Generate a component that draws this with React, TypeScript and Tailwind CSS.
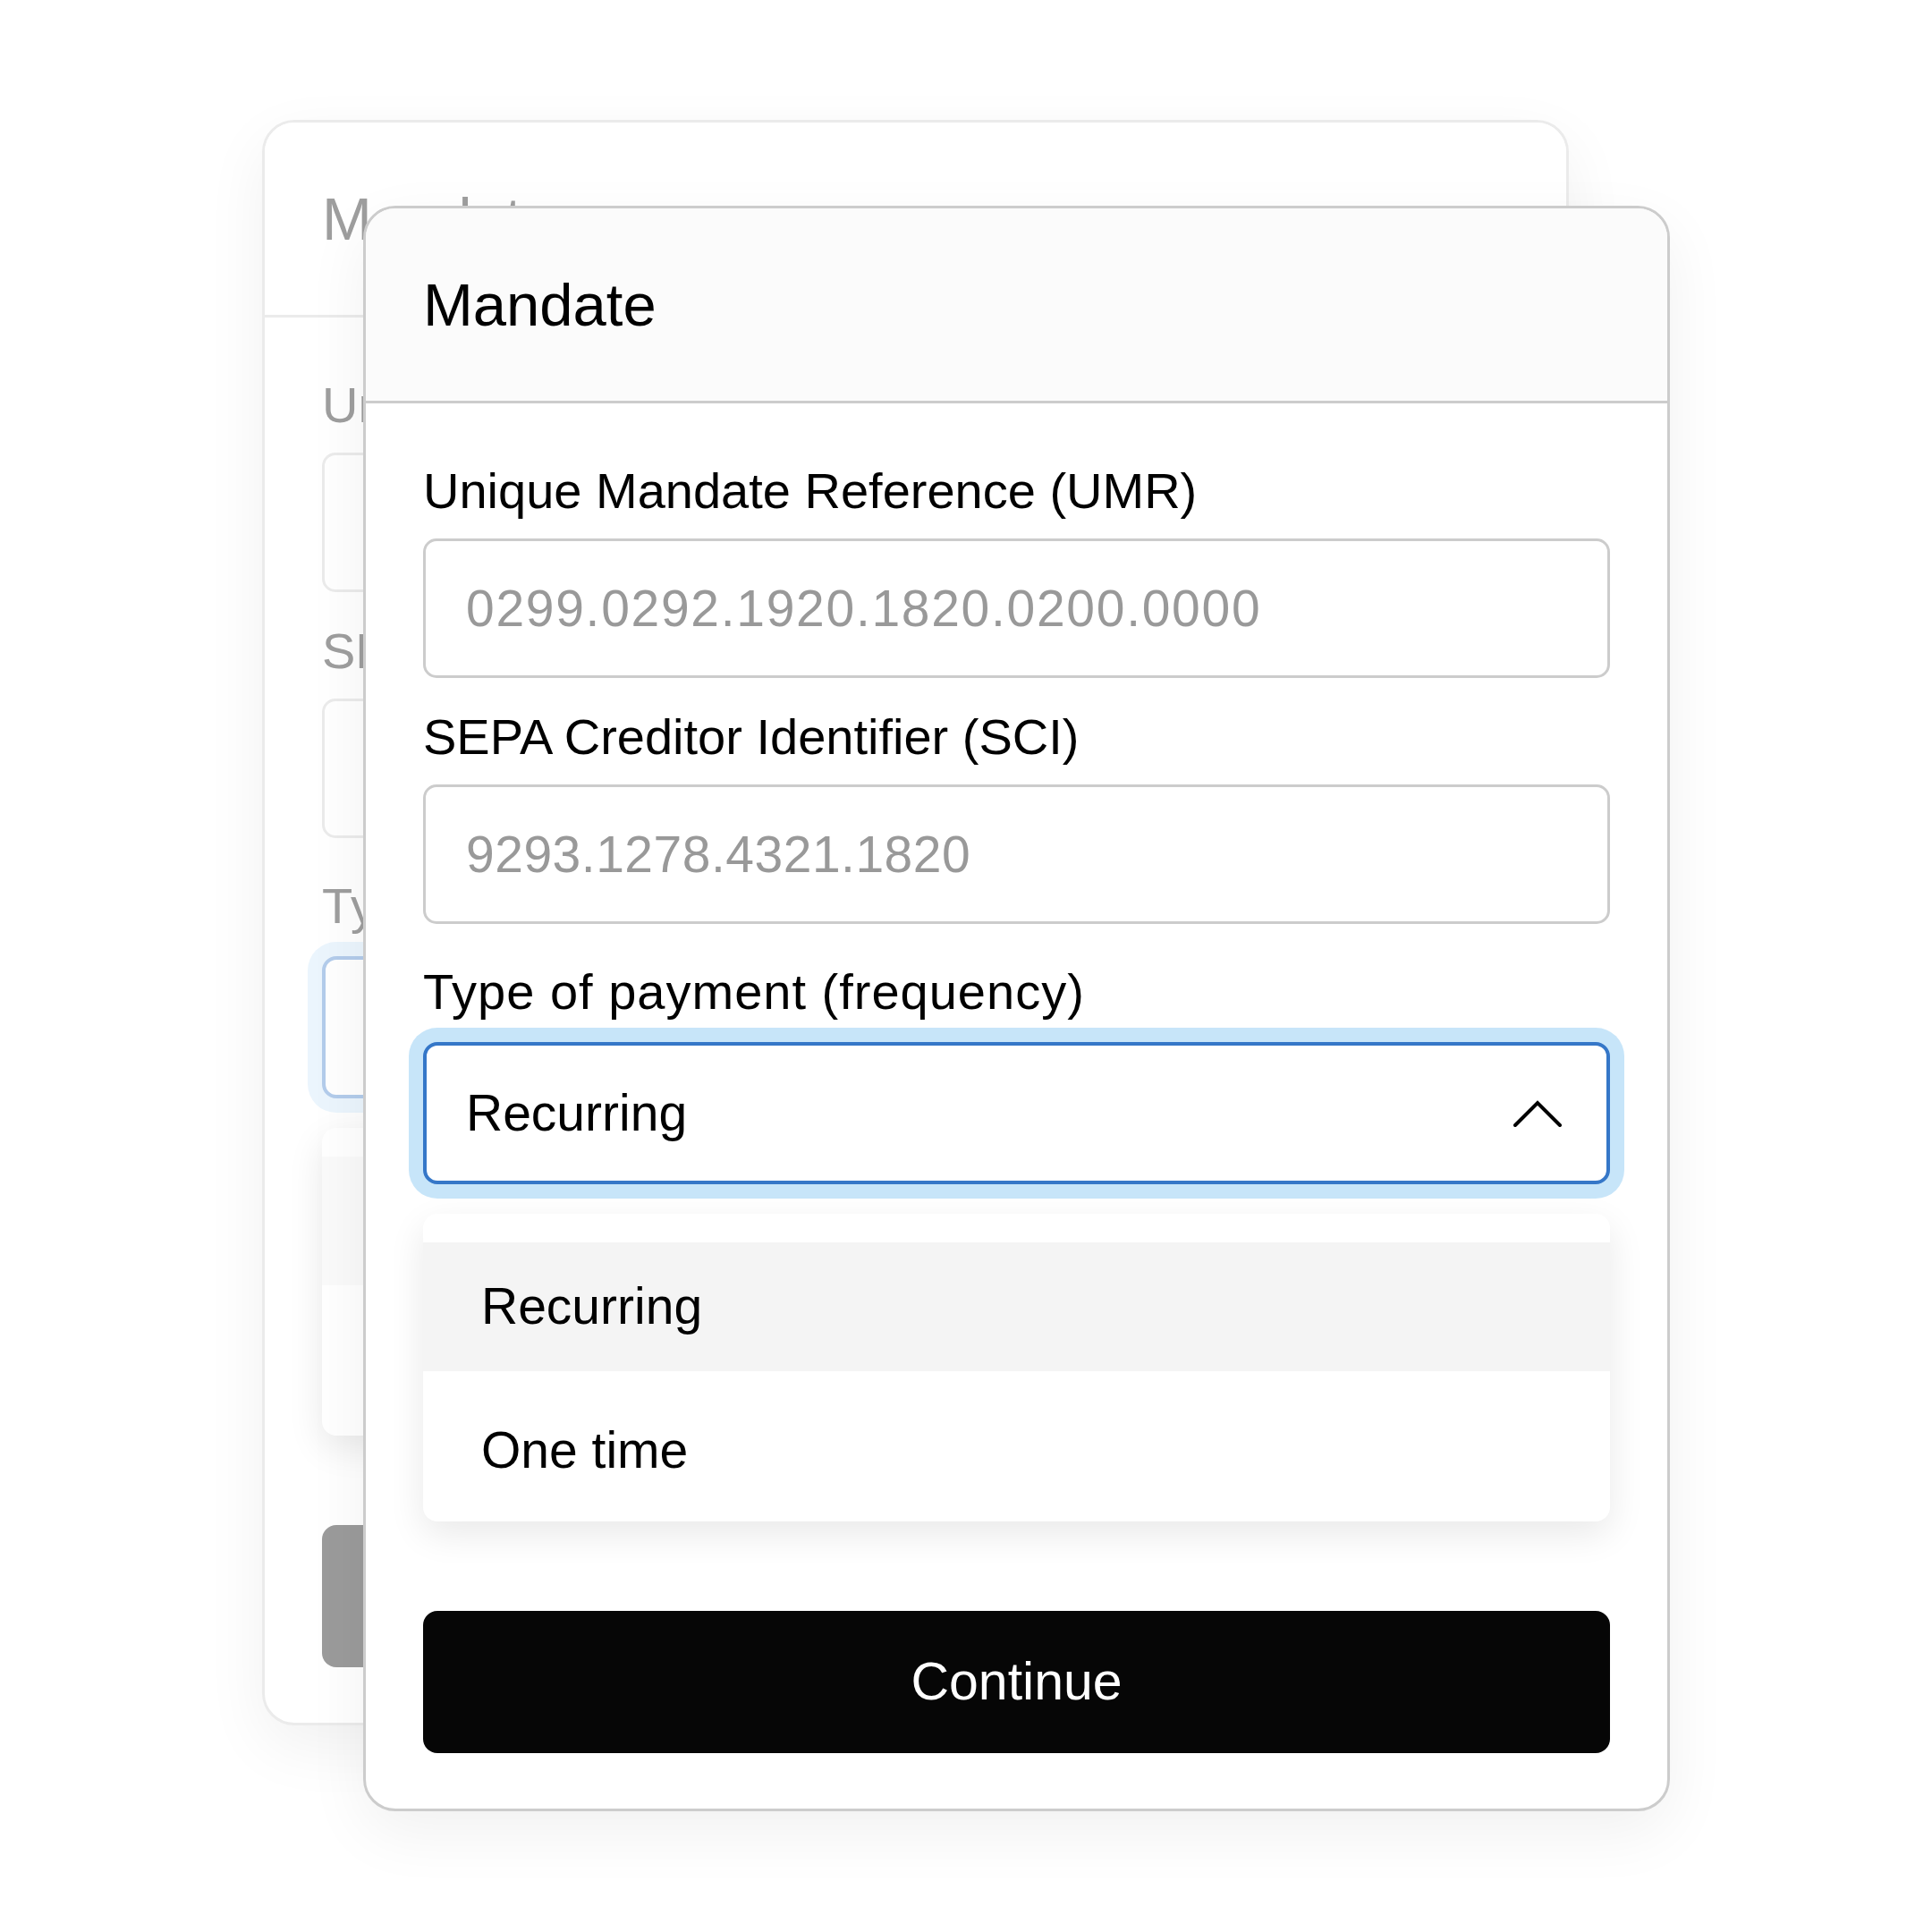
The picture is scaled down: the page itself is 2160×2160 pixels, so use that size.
import React from 'react';

const FIELDS = [
  { label: 'Unique Mandate Reference (UMR)', placeholder: '0299.0292.1920.1820.0200.0000', track: 'tracking-[1.7px]' },
  { label: 'SEPA Creditor Identifier (SCI)', placeholder: '9293.1278.4321.1820', track: 'tracking-[0.5px]' },
];

const OPTIONS = ['Recurring', 'One time'];

function ChevronUp({ color }: { color: string }) {
  return (
    <svg width="54" height="30" viewBox="0 0 54 30" fill="none">
      <polyline points="2,28 27,3 52,28" stroke={color} strokeWidth="4" strokeLinecap="round" strokeLinejoin="miter" />
    </svg>
  );
}

function MandateCard({ muted = false }: { muted?: boolean }) {
  const text = muted ? 'text-[#9e9e9e]' : 'text-black';
  return (
    <div
      className={`w-[1461px] h-[1795px] rounded-[36px] border-[3px] bg-white overflow-hidden flex flex-col shadow-[0_24px_70px_rgba(0,0,0,0.06)] ${
        muted ? 'border-[#ebebeb]' : 'border-[#cccccc]'
      }`}
    >
      <div
        className={`h-[218px] shrink-0 flex items-center px-16 border-b-[3px] ${
          muted ? 'bg-white border-[#ebebeb]' : 'bg-[#fbfbfb] border-[#cccccc]'
        }`}
      >
        <h1 className={`text-[67px] leading-none ${text}`}>Mandate</h1>
      </div>

      <div className="flex flex-col px-16 pt-[66px]">
        {FIELDS.map((f, i) => (
          <div key={f.label} className={`flex flex-col ${i > 0 ? 'mt-[34px]' : ''}`}>
            <label className={`text-[56px] leading-[64px] ${text}`}>{f.label}</label>
            <input
              readOnly
              placeholder={f.placeholder}
              className={`mt-[21px] h-[156px] w-full rounded-[15px] border-[3px] bg-white pl-[45px] text-[57px] outline-none ${f.track} ${
                muted ? 'border-[#ebebeb] placeholder:text-[#d0d0d0]' : 'border-[#cccccc] placeholder:text-[#999999]'
              }`}
            />
          </div>
        ))}

        <label className={`mt-[44px] text-[56px] leading-[64px] tracking-[1px] ${text}`}>Type of payment (frequency)</label>
        <button
          className={`mt-[24px] h-[159px] w-full rounded-[16px] border-4 bg-white pl-[44px] pr-[50px] flex items-center justify-between ${
            muted
              ? 'border-[#b3cceb] shadow-[0_0_0_16px_#ebf5fd]'
              : 'border-[#3577c8] shadow-[0_0_0_16px_#c7e5f9]'
          }`}
        >
          <span className={`text-[57px] leading-none ${text}`}>Recurring</span>
          <ChevronUp color={muted ? '#b5b5b5' : '#000000'} />
        </button>

        <div className="mt-[33px] rounded-[16px] bg-white pt-[32px] shadow-[0_14px_40px_rgba(0,0,0,0.09)]">
          {OPTIONS.map((o, i) => (
            <div
              key={o}
              className={`flex items-center pl-[65px] text-[57px] ${text} ${
                i === 0 ? `h-[144px] ${muted ? 'bg-[#fafafa]' : 'bg-[#f4f4f4]'}` : 'h-[168px] pt-[10px]'
              }`}
            >
              {o}
            </div>
          ))}
        </div>

        <button
          className={`mt-[100px] h-[159px] w-full rounded-[16px] flex items-center justify-center text-white text-[59px] ${
            muted ? 'bg-[#9b9b9b]' : 'bg-[#060606]'
          }`}
        >
          Continue
        </button>
      </div>
    </div>
  );
}

export default function App() {
  return (
    <div className="w-[2160px] h-[2160px] bg-white font-['Liberation_Sans',Arial,sans-serif]">
      <div className="grid pl-[293px] pt-[134px]">
        <div className="[grid-area:1/1]">
          <MandateCard muted />
        </div>
        <div className="[grid-area:1/1] ml-[113px] mt-[96px]">
          <MandateCard />
        </div>
      </div>
    </div>
  );
}
